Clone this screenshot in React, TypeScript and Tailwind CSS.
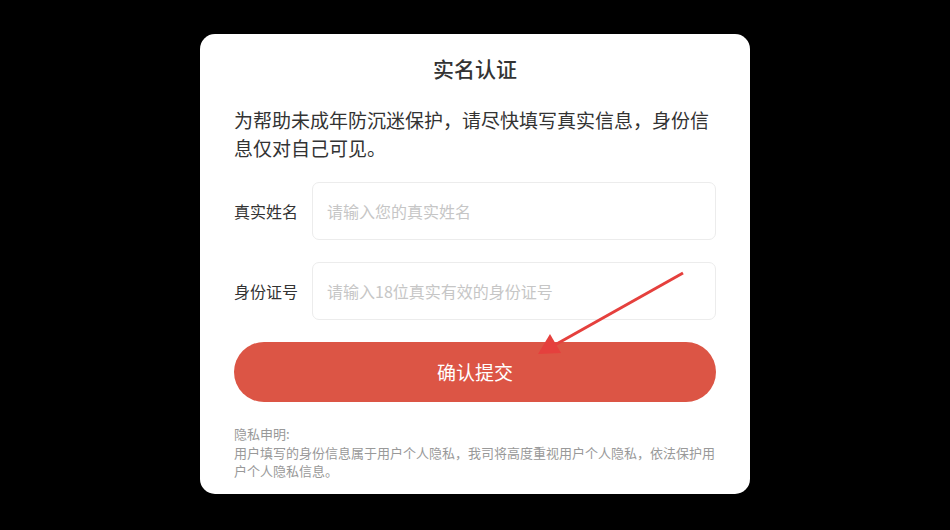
import React from 'react';

const font = { fontFamily: '"Noto Sans CJK SC", "Noto Sans", sans-serif' };

function Field({ label, placeholder }: { label: string; placeholder: string }) {
  return (
    <div className="flex items-center">
      <label className="w-[78px] shrink-0 text-[16px] text-[#333]">{label}</label>
      <input
        type="text"
        placeholder={placeholder}
        className="h-[58px] flex-1 rounded-[7px] border border-[#ececec] bg-white px-[14px] text-[16px] text-[#333] outline-none placeholder:text-[#c6c6c6]"
      />
    </div>
  );
}

export default function App() {
  return (
    <div className="relative flex h-[530px] w-[950px] justify-center bg-black pt-[34px]" style={font}>
      <div className="h-[460px] w-[550px] rounded-[15px] bg-white px-[34px] pt-[18px] pb-[14px]">
        <h1 className="text-center text-[21px] font-medium leading-[32px] text-[#333]">实名认证</h1>
        <p className="mt-[22px] text-[19px] leading-[28px] text-[#333]">
          为帮助未成年防沉迷保护，请尽快填写真实信息，身份信息仅对自己可见。
        </p>

        <div className="mt-[20px] flex flex-col gap-[22px]">
          <Field label="真实姓名" placeholder="请输入您的真实姓名" />
          <Field label="身份证号" placeholder="请输入18位真实有效的身份证号" />
          <button className="h-[60px] w-full rounded-full bg-[#dc5545] text-[19px] text-white">
            确认提交
          </button>
        </div>

        <div className="mt-[23px] text-[13px] leading-[18.5px] text-[#999]">
          <p>隐私申明:</p>
          <p>用户填写的身份信息属于用户个人隐私，我司将高度重视用户个人隐私，依法保护用户个人隐私信息。</p>
        </div>
      </div>

      {/* annotation arrow over the form */}
      <svg className="pointer-events-none absolute inset-0" width="950" height="530">
        <line x1="683" y1="273" x2="553" y2="346" stroke="#e5403d" strokeWidth="3" />
        <polygon points="550,334 538,354 561,353" fill="#e5403d" />
      </svg>
    </div>
  );
}
